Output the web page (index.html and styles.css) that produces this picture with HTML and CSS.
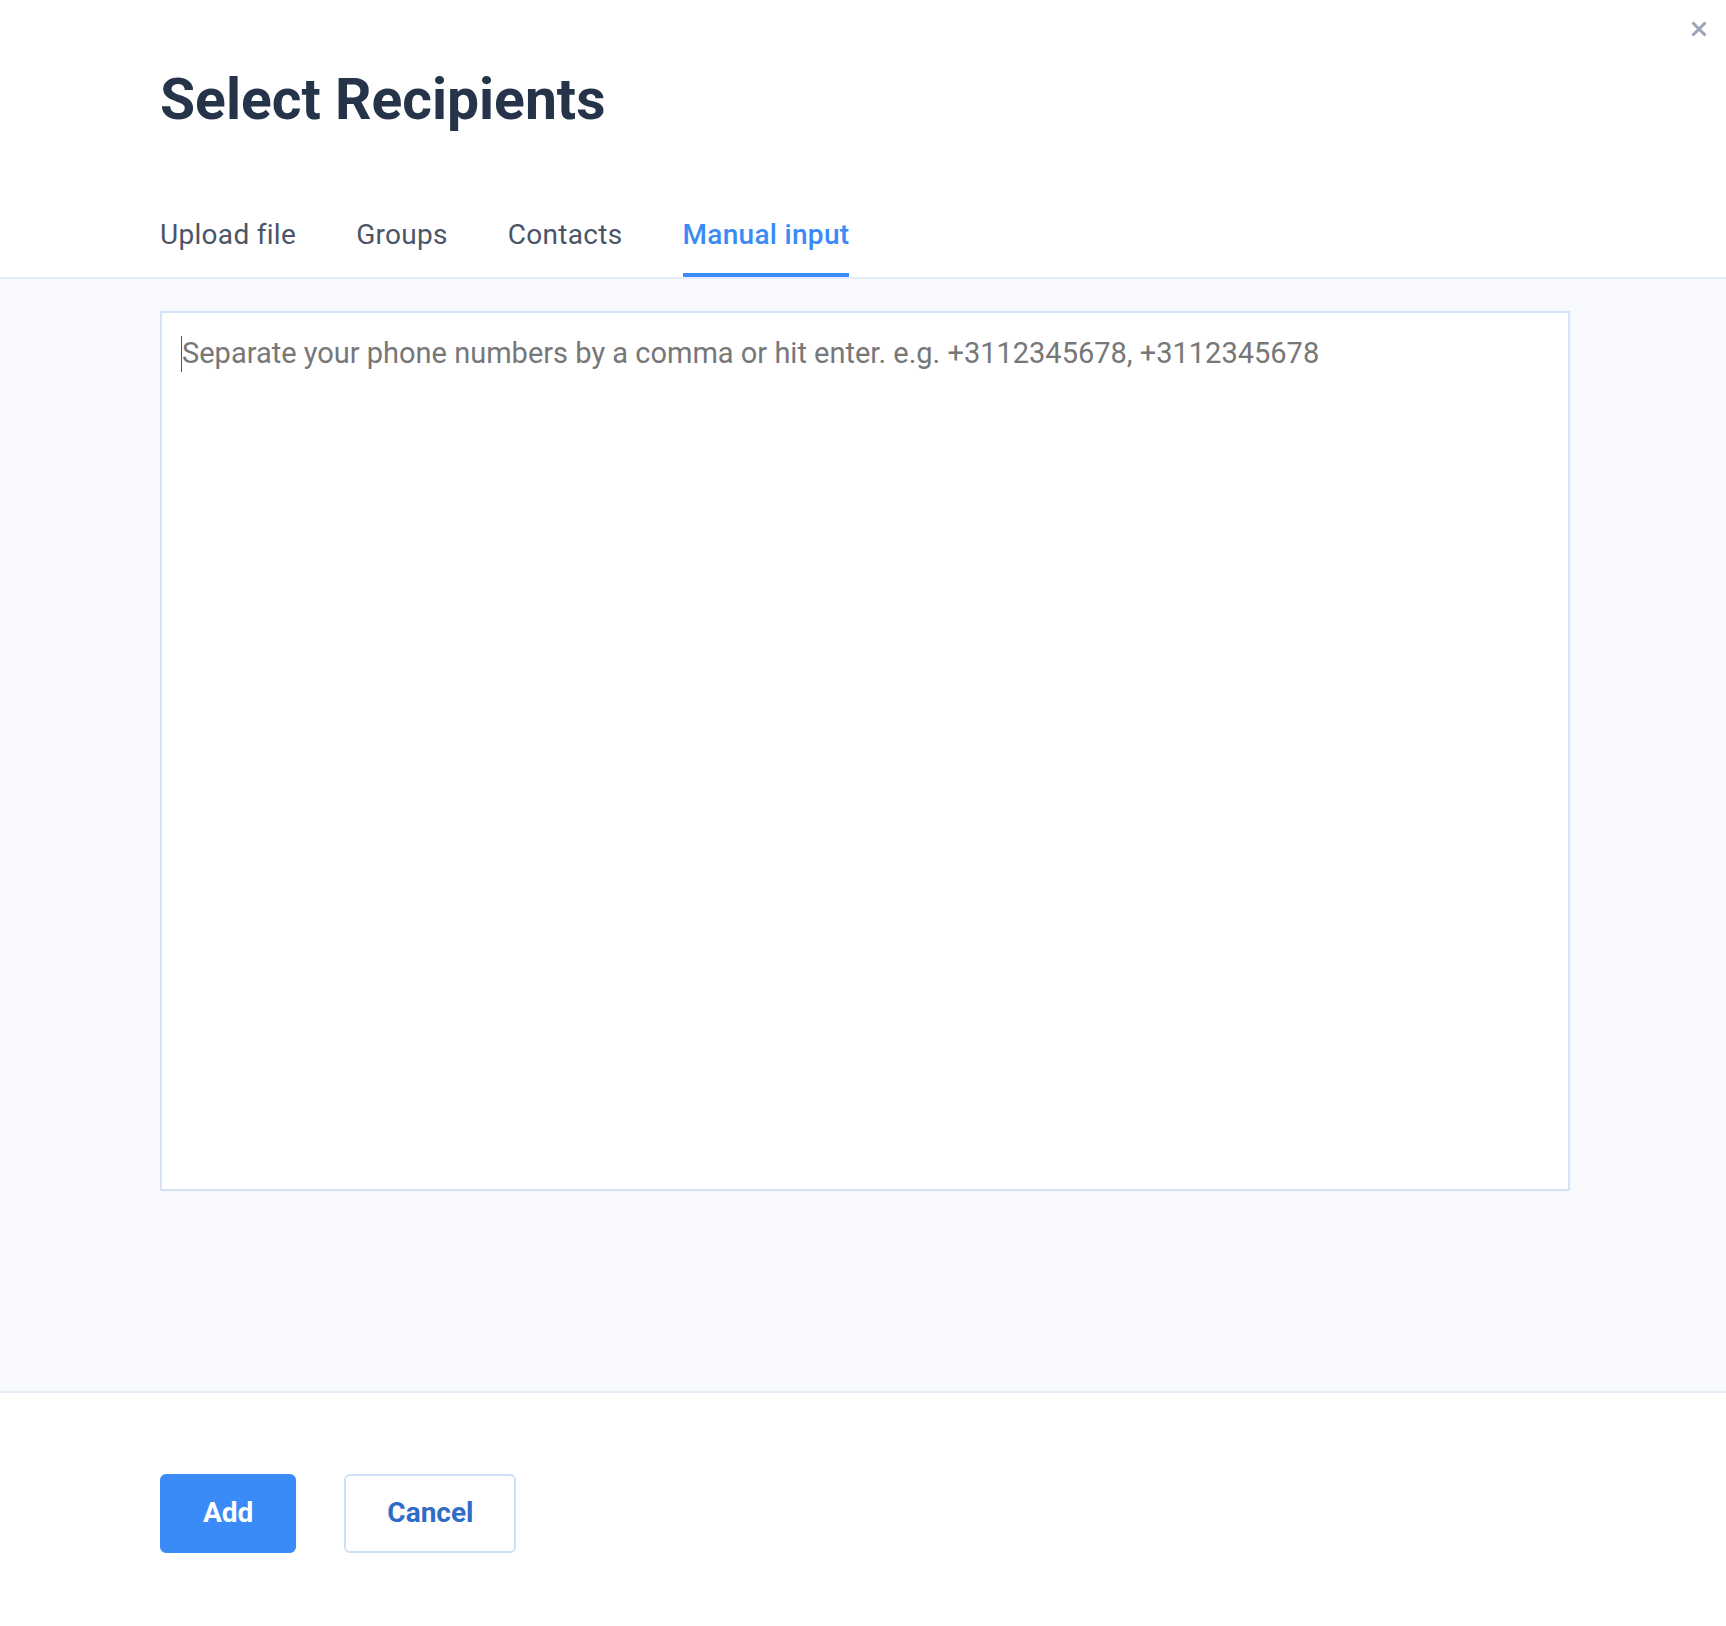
FILE: index.html
```html
<!DOCTYPE html>
<html lang="en">
<head>
<meta charset="utf-8">
<title>Select Recipients</title>
<link rel="stylesheet" href="styles.css">
</head>
<body>
<div class="modal">
  <button class="close" aria-label="Close">
    <svg width="16" height="16" viewBox="0 0 16 16"><path d="M1.5 1.5 L14.5 14.5 M14.5 1.5 L1.5 14.5" stroke="#9aa5bb" stroke-width="3" stroke-linecap="butt"/></svg>
  </button>
  <header class="modal-header">
    <h1 class="title">Select Recipients</h1>
    <nav class="tabs">
      <a class="tab">Upload file</a>
      <a class="tab">Groups</a>
      <a class="tab">Contacts</a>
      <a class="tab tab-active">Manual input</a>
    </nav>
  </header>
  <main class="modal-body">
    <div class="field">
      <textarea class="numbers" autofocus placeholder="Separate your phone numbers by a comma or hit enter. e.g. +3112345678, +3112345678"></textarea>
      <span class="caret"></span>
    </div>
  </main>
  <footer class="modal-footer">
    <button class="btn btn-primary">Add</button>
    <button class="btn btn-secondary">Cancel</button>
  </footer>
</div>
</body>
</html>
```
FILE: styles.css
```css
html, body {
  margin: 0;
  padding: 0;
  background: #ffffff;
}
body {
  font-family: Roboto, "Liberation Sans", sans-serif;
}
.modal {
  position: relative;
  width: 1726px;
  min-height: 1626px;
  background: #ffffff;
}
.close {
  position: absolute;
  top: 21px;
  left: 1691px;
  width: 16px;
  height: 16px;
  padding: 0;
  border: 0;
  background: none;
  cursor: pointer;
}
.close svg { display: block; }
.modal-header {
  padding: 66px 0 0 160px;
  border-bottom: 2px solid #e6edf8;
}
.title {
  margin: 0 0 84px;
  font-size: 57px;
  line-height: 68px;
  font-weight: 700;
  color: #253449;
}
.tabs {
  display: flex;
  gap: 60px;
}
.tab {
  display: block;
  font-size: 28px;
  line-height: 34px;
  letter-spacing: 0.3px;
  color: #4b5567;
  padding-bottom: 21px;
  border-bottom: 4px solid transparent;
  cursor: pointer;
}
.tab-active {
  color: #3b8bf6;
  font-weight: 500;
  border-bottom-color: #3b8bf6;
}
.modal-body {
  background: #f7f9fd;
  padding: 32px 0 200px 160px;
}
.field {
  position: relative;
  width: 1410px;
}
.numbers {
  display: block;
  box-sizing: border-box;
  width: 1410px;
  height: 880px;
  margin: 0;
  padding: 18px 20px 16px;
  border: 2px solid #d4e3f6;
  border-radius: 0;
  background: #ffffff;
  font-family: Roboto, "Liberation Sans", sans-serif;
  font-size: 29px;
  line-height: 45px;
  color: #2d3748;
  caret-color: transparent;
  resize: none;
  outline: none;
}
.numbers::placeholder {
  color: #777777;
  opacity: 1;
}
.caret {
  position: absolute;
  left: 21px;
  top: 25px;
  width: 1px;
  height: 36px;
  background: #4b5567;
  pointer-events: none;
}
.modal-footer {
  border-top: 2px solid #e6edf8;
  padding: 81px 0 0 160px;
  display: flex;
  gap: 48px;
}
.btn {
  box-sizing: border-box;
  height: 79px;
  padding: 0 41px 2px;
  border-radius: 6px;
  font-family: Roboto, "Liberation Sans", sans-serif;
  font-size: 28px;
  font-weight: 700;
  cursor: pointer;
}
.btn-primary {
  background: #3a8bf8;
  border: 2px solid #3a8bf8;
  color: #ffffff;
}
.btn-secondary {
  background: #ffffff;
  border: 2px solid #cfe0f4;
  color: #2f6cc8;
}
```
